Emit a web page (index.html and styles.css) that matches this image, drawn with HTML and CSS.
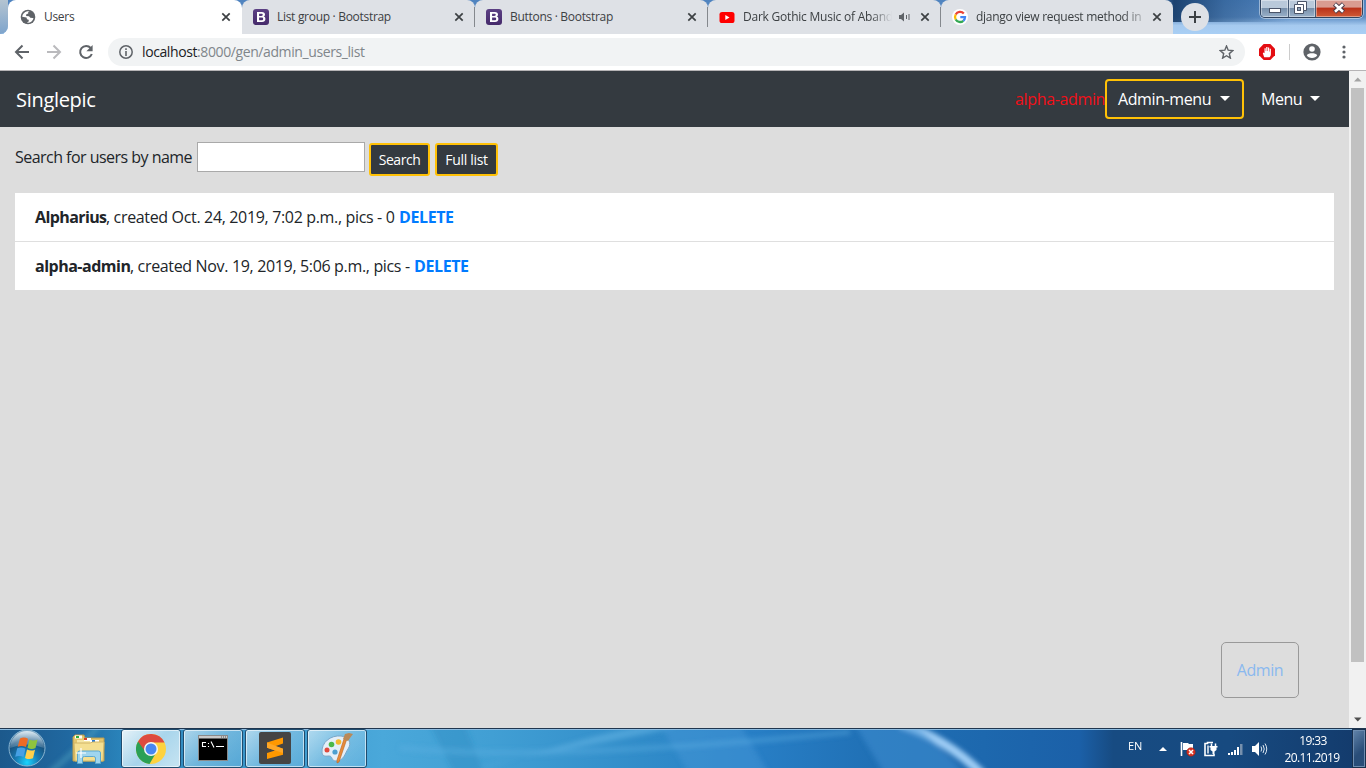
FILE: index.html
```html
<!DOCTYPE html>
<html lang="en">
<head>
<meta charset="utf-8">
<title>Users</title>
<link rel="stylesheet" href="styles.css">
</head>
<body>
<svg width="0" height="0" class="defs">
  <defs>
    <symbol id="close" viewBox="0 0 10 10"><path d="M1.3 1.3l7.4 7.4M8.7 1.3L1.3 8.7" stroke="#3c4043" stroke-width="1.7" fill="none"/></symbol>
    <linearGradient id="bs" x1="0" y1="0" x2="0" y2="1"><stop offset="0" stop-color="#5c4084"/><stop offset="1" stop-color="#452a6b"/></linearGradient>
    <symbol id="boot" viewBox="0 0 16 16"><rect width="16" height="16" rx="3" fill="url(#bs)"/><path fill-rule="evenodd" fill="#fff" d="M4 3h4.900c2 0 3.100 1 3.100 2.500 0 1-.5 1.700-1.300 2.100 1.100.3 1.700 1.200 1.700 2.400C12.400 11.900 11.100 13 9 13H4zM6.100 4.700v2.200h2.200c.9 0 1.500-.4 1.500-1.100s-.5-1.100-1.400-1.100zM6.100 8.500v2.800h2.500c1 0 1.600-.5 1.600-1.400s-.6-1.400-1.700-1.400z"/></symbol>
  </defs>
</svg>

<header class="tabstrip">
  <div class="tab active">
    <svg class="fav" viewBox="0 0 16 16"><circle cx="8" cy="8" r="7.300" fill="#5f6368"/><path d="M2.200 7.800C2.400 5 4.500 2.600 7.300 2.200L9.600 2.400 8 3.600 8.300 4.600 6.300 5.300 6.100 6.900 9 7.300 10.300 8.800 12.600 8.900 13.500 9.200C12.900 11.700 10.700 13.700 8 13.700L7 13.600 8.900 12.200 8.600 10.800 7 10.300 6.500 8.600z" fill="#fff"/></svg>
    <span class="title">Users</span><svg class="x"><use href="#close"/></svg>
  </div>
  <div class="tab"><svg class="fav"><use href="#boot"/></svg><span class="title">List group · Bootstrap</span><svg class="x"><use href="#close"/></svg></div>
  <div class="tab line"><svg class="fav"><use href="#boot"/></svg><span class="title">Buttons · Bootstrap</span><svg class="x"><use href="#close"/></svg></div>
  <div class="tab line"><svg class="fav" viewBox="0 0 16 16"><rect x="0.500" y="3" width="15" height="11" rx="2.600" fill="#f00"/><path d="M6.300 6v5l4.200-2.500z" fill="#fff"/></svg><span class="title fade audio">Dark Gothic Music of Aband</span>
    <svg class="sound" viewBox="0 0 12 10"><path d="M0 3h2l3-2.500v9L2 7H0z" fill="#5f6368"/><path d="M7.500 3v4M10 2v6" stroke="#5f6368" fill="none"/></svg>
    <svg class="x"><use href="#close"/></svg></div>
  <div class="tab line last"><svg class="fav" viewBox="0 0 16 16"><circle cx="8" cy="8" r="8" fill="#fff"/><g fill="none" stroke-width="2.300"><path d="M11.800 4.500A5 5 0 0 0 3.700 5.500" stroke="#ea4335"/><path d="M3.700 5.500a5 5 0 0 0 0 5" stroke="#fbbc05"/><path d="M3.700 10.500a5 5 0 0 0 7.600 1.300" stroke="#34a853"/><path d="M11.300 11.800A5 5 0 0 0 13 8.200H8.300" stroke="#4285f4"/></g></svg><span class="title fade">django view request method in</span><svg class="x"><use href="#close"/></svg></div>
  <div class="newtab"><svg width="12" height="12"><path d="M6 0v12M0 6h12" stroke="#3c4043" stroke-width="2"/></svg></div>
  <div class="winctl">
    <div class="wb min"><svg width="14" height="7"><rect x="1.500" y="1.500" width="11" height="4" fill="#fff" stroke="#4a5468"/></svg></div>
    <div class="wb max"><svg width="13" height="13"><path d="M3.500.5h9v9h-3v3h-9v-9h3z" fill="#fff" stroke="#4a5468"/><path d="M3.500 3.500h6v6" fill="none" stroke="#4a5468"/><rect x="3.500" y="6.500" width="3" height="3" fill="#8fa3ba" stroke="#4a5468"/></svg></div>
    <div class="wb cls"><svg width="14" height="12"><path d="M2.500 2l9 8M11.500 2l-9 8" stroke="#4a3a48" stroke-width="4.600"/><path d="M3 2.300l8 7.400M11 2.300L3 9.700" stroke="#fff" stroke-width="2.600"/></svg></div>
  </div>
</header>

<div class="toolbar">
  <svg class="nav-ico" viewBox="0 0 16 16"><path d="M15 8H2.500M8.500 1.500L2 8l6.500 6.500" stroke="#5f6368" stroke-width="2" fill="none"/></svg>
  <svg class="nav-ico" viewBox="0 0 16 16"><path d="M1 8h12.500M7.500 1.500L14 8l-6.500 6.500" stroke="#bababd" stroke-width="2" fill="none"/></svg>
  <svg class="nav-ico" viewBox="0 0 16 16"><path d="M12.700 4A6 6 0 1 0 13.800 10" stroke="#5f6368" stroke-width="2" fill="none"/><path d="M14.600 1v6.200H8.400z" fill="#5f6368"/></svg>
  <div class="omnibox">
    <svg width="14" height="14"><circle cx="7" cy="7" r="6.200" fill="none" stroke="#5f6368" stroke-width="1.500"/><path d="M7 6v5M7 3.200v1.700" stroke="#5f6368" stroke-width="1.600"/></svg>
    <span class="url"><b>localhost</b>:8000/gen/admin_users_list</span>
    <svg class="star" width="15" height="14" viewBox="0 0 15 14"><path d="M7.500 1l1.700 4.200 4.600.4-3.500 3 1.100 4.500-3.900-2.400-3.900 2.400 1.100-4.500-3.500-3 4.600-.4z" fill="none" stroke="#5f6368" stroke-width="1.400"/></svg>
  </div>
  <svg class="block" width="16" height="16"><path d="M4.700 0h6.600L16 4.700v6.600L11.300 16H4.700L0 11.300V4.700z" fill="#e40d12"/><path d="M5.200 13.300L3.800 9.200l.7-.6 1 .7V4.300h1.200V7h.5V2.900h1.300V7h.5V3.400h1.200v4h.5V4.700h1.200v5.200c0 1.700-.7 2.700-1.400 3.400z" fill="#fff"/></svg>
  <span class="sep"></span>
  <svg class="user" width="18" height="18"><circle cx="9" cy="9" r="8.600" fill="#5f6368"/><circle cx="9" cy="6" r="2.800" fill="#fff"/><path d="M3.800 12.200C5.500 9.600 12.500 9.600 14.200 12.200 12.500 15.800 5.500 15.800 3.800 12.200z" fill="#fff"/></svg>
  <svg class="dots" width="4" height="14"><g fill="#5f6368"><circle cx="2" cy="2" r="1.600"/><circle cx="2" cy="7" r="1.600"/><circle cx="2" cy="12" r="1.600"/></g></svg>
</div>

<div class="viewport">
  <main class="page">
    <nav class="navbar">
      <a class="brand">Singlepic</a>
      <span class="who">alpha-admin</span>
      <a class="adminmenu"><span>Admin-menu</span><i class="caret"></i></a>
      <a class="menu"><span>Menu</span><i class="caret"></i></a>
    </nav>
    <form class="search">
      <label>Search for users by name</label>
      <input type="text">
      <button type="button">Search</button>
      <button type="button" class="full">Full list</button>
    </form>
    <ul class="list">
      <li><b class="n1">Alpharius</b><span class="d1">, created Oct. 24, 2019, 7:02 p.m., pics - 0</span><a>DELETE</a></li>
      <li><b class="n2">alpha-admin</b><span class="d2">, created Nov. 19, 2019, 5:06 p.m., pics -</span><a>DELETE</a></li>
    </ul>
    <button type="button" class="admin">Admin</button>
  </main>
  <div class="scroll">
    <svg width="17" height="17"><path d="M5 10.500h7.500L8.750 6.500z" fill="#a3a3a3"/></svg>
    <div class="thumb"></div>
    <svg width="17" height="17"><path d="M5 6.500h7.500L8.750 10.500z" fill="#505050"/></svg>
  </div>
</div>

<footer class="taskbar">
  <svg class="wall" viewBox="0 0 1366 38" preserveAspectRatio="none">
    <defs>
      <linearGradient id="sky"><stop offset="0" stop-color="#1c598c"/><stop offset=".05" stop-color="#2068a0"/><stop offset=".09" stop-color="#2a84bb"/><stop offset=".28" stop-color="#4aa8da"/><stop offset=".36" stop-color="#419fd4"/><stop offset=".47" stop-color="#318cc9"/><stop offset=".55" stop-color="#287fc6"/><stop offset=".64" stop-color="#2070b5"/><stop offset=".72" stop-color="#1d68ae"/><stop offset=".79" stop-color="#1b60a8"/><stop offset=".815" stop-color="#174b82"/><stop offset=".9" stop-color="#174a80"/><stop offset="1" stop-color="#133a6b"/></linearGradient>
      <filter id="soft" x="-20%" y="-50%" width="140%" height="200%"><feGaussianBlur stdDeviation="2.600"/></filter>
    </defs>
    <rect width="1366" height="38" fill="url(#sky)"/>
    <g filter="url(#soft)">
      <path d="M900-6C935 5 960 22 982 44" stroke="#9fcdf5" stroke-width="9" fill="none"/>
      <path d="M470 40C540 20 590 18 680-4L640-4C570 10 530 28 470 40z" fill="#6cb9e8" opacity=".5"/>
      <path d="M430-5l25 50h30L465-5z" fill="#2686be" opacity=".35"/>
      <path d="M660-5h80l30 50h-80z" fill="#4b9bda" opacity=".4"/>
      <path d="M50 42q25-20 48-45" stroke="#5fb4c9" stroke-width="5" fill="none" opacity=".4"/>
      <path d="M855-5h60q30 25 50 50h-80z" fill="#3f91d3" opacity=".5"/>
      <path d="M400 18q150 14 450-16" stroke="#62b2e4" stroke-width="5" fill="none" opacity=".4"/>
    </g>
  </svg>
  <div class="start"><svg width="40" height="38" viewBox="0 0 40 38">
    <defs><radialGradient id="orb" cx=".5" cy=".9" r=".9"><stop offset="0" stop-color="#19d5ff"/><stop offset=".35" stop-color="#187cb4"/><stop offset=".7" stop-color="#184f7b"/><stop offset="1" stop-color="#7fa9c7"/></radialGradient><linearGradient id="shine" x1="0" y1="0" x2="0" y2="1"><stop offset="0" stop-color="#f0f7fb" stop-opacity=".85"/><stop offset="1" stop-color="#a4c4d8" stop-opacity=".25"/></linearGradient></defs>
    <circle cx="20" cy="19" r="18" fill="url(#orb)" stroke="#8ab6d2" stroke-width="1"/>
    <path d="M3 19a17 17 0 0 1 34 0q-17-7-34 0z" fill="url(#shine)"/>
    <path d="M13 9.500q4-2 8 .3L19 18q-4-2-8.300-.3z" fill="#ee6b25"/><path d="M22.500 10.500q4 2 8 0L28.500 19q-4 2-8-.3z" fill="#8fc43e"/><path d="M10.200 19.300q4.300-1.700 8.300.4L16.500 28q-4-2-8.300-.3z" fill="#46a0e4"/><path d="M20 20.500q4 2 8 .2L26 29.300q-4 1.800-8-.4z" fill="#ffd04a"/>
  </svg></div>
  <div class="folder"><svg width="34" height="32" viewBox="0 0 34 32"><path d="M1 27V3l2-2h9l1 3h19v23z" fill="#e3c56d" stroke="#b99b4c"/><path d="M3 1.500h7v3H3z" fill="#fff"/><path d="M4 2h3v2H4z" fill="#2dae3d"/><path d="M5 6h18v18H5z" fill="#f6e6a4"/><path d="M12 4h7v3h-7z" fill="#fff"/><path d="M12 4h3v2h-3z" fill="#d5402b"/><path d="M18 6h9v3h-9z" fill="#fff"/><path d="M20 6h3v2h-3z" fill="#2a7bd4"/><path d="M2 9h16l3-1h11l-1 19H3z" fill="#f4df91" stroke="#d1b566"/><path d="M5.500 29.500V19q0-2 2-2h19q2 0 2 2v10.500h-5V24q0-1.500-2-1.500h-9q-2 0-2 1.500v5.500z" fill="#9fd5ee" stroke="#5ca8ce"/><path d="M9 14v10M4 19h10" stroke="#fff" stroke-width="1.200"/></svg></div>
  <div class="app on"><svg width="30" height="30" viewBox="0 0 30 30"><circle cx="15" cy="15" r="15" fill="#fdd23f"/><path d="M15 15L2 7.500A15 15 0 0 0 13.500 30l7-12z" fill="#2aa056"/><path d="M2 7.500A15 15 0 0 1 28.500 8.500H15a6.500 6.500 0 0 0-6.300 8.200z" fill="#dd4b40"/><circle cx="15" cy="15" r="7" fill="#f4f6f4"/><circle cx="15" cy="15" r="5.500" fill="#4787f2"/></svg></div>
  <div class="app"><svg width="30" height="26" viewBox="0 0 30 26"><rect x=".5" y=".5" width="29" height="25" fill="#000" stroke="#8a8a8a"/><path d="M1 1h28v2.500H1z" fill="#c9c9c9"/><path d="M23 2h1M25 2h1M27 2h1" stroke="#555"/><path d="M8 7.500H4.500v4H8M10.500 8v1M10.500 11v1M13 6.500l3 6M18 11.500h8" fill="none" stroke="#fff" stroke-width="1.100"/></svg></div>
  <div class="app"><svg width="32" height="32" viewBox="0 0 32 32"><rect width="32" height="32" rx="2" fill="#454545"/><path d="M8 10.500L24 5.500v6l-8 2.700 8 2.500v6L8 27v-6l8-2.500-8-2.700z" fill="#ff9800"/><path d="M8 10.500v5.300l16 5.200v-4.300z" fill="#ffa726"/></svg></div>
  <div class="app"><svg width="32" height="32" viewBox="0 0 32 32"><path d="M1 21C0 10 10 3 20 4c8 1 11 7 7 13-3 4-4 12-12 12-5 0-3-5-7-5-3 0-6 1-7-3z" fill="#e4eff8" stroke="#7da6c7"/><circle cx="6" cy="18" r="2.500" fill="#e04a3d"/><circle cx="10.500" cy="12.500" r="2.800" fill="#4cb849"/><circle cx="17.500" cy="10" r="2.800" fill="#f5b82e"/><circle cx="14" cy="20" r="2.600" fill="#4c9fd0"/><path d="M25.500 8L18 30l-2 1v-3L23 7z" fill="#e68a3a" stroke="#b96521" stroke-width=".6"/><path d="M22 7l2-5 4-1 4 1-3 4-2 3z" fill="#b98959"/></svg></div>
  <div class="tray">
    <span class="lang">EN</span>
    <svg class="t1" width="8" height="4"><path d="M0 4L4 0l4 4z" fill="#fff"/></svg>
    <svg class="t2" width="16" height="16"><path d="M1.500 1v14" stroke="#fff" stroke-width="1.600"/><path d="M3 2h5l1 1h4v7H8L7 9H3z" fill="#fff"/><circle cx="11" cy="11" r="4.300" fill="#d93425" stroke="#8e2115" stroke-width=".5"/><path d="M9 9l4 4M13 9l-4 4" stroke="#fff" stroke-width="1.500"/></svg>
    <svg class="t3" width="14" height="16"><path d="M9 1.500H3.500v1H1v12h9V13" fill="none" stroke="#fff" stroke-width="1.600"/><path d="M3 4.500h2v8H3z" fill="#fff" opacity=".7"/><path d="M7.500 2.500v3M11.500 2.500v3" stroke="#fff" stroke-width="1.500"/><path d="M5.500 5h8v1.500h-1V9l-2 1.500V13H8.500v-2.500L6.500 9V6.500h-1z" fill="#fff"/></svg>
    <svg class="t4" width="15" height="12"><path d="M0 9h2v2H0zM3 8h2v3H3zM6 6h2v5H6zM9 3h2v8H9z" fill="#fff"/><path d="M12 0h2.500v11H12z" fill="#7690ad"/></svg>
    <svg class="t5" width="16" height="14"><path d="M0 4h3l4-4v14L3 10H0z" fill="#fff"/><path d="M9 4.500q1.500 2.500 0 5M11 3q2.500 4 0 8M13 1.500q3.500 5.500 0 11" stroke="#dce7f2" fill="none"/></svg>
    <div class="clock"><span class="tm">19:33</span><span>20.11.2019</span></div>
    <span class="peek"></span>
  </div>
</footer>
</body>
</html>
```
FILE: styles.css
```css
* { box-sizing: border-box; }
body { margin: 0; width: 1366px; height: 768px; overflow: hidden; display: flex; flex-direction: column; font-family: "Open Sans", "Noto Sans", sans-serif; color: #212529; }
.defs { position: absolute; }
svg { display: block; flex: none; }

.tabstrip { height: 34px; flex: none; display: flex; padding-left: 8px; position: relative; white-space: nowrap;
  background: linear-gradient(90deg, transparent 1160px, rgba(18,54,98,.85) 1174px, rgba(35,80,130,.5) 1225px, transparent 1290px) 0 0 / 100% 22px no-repeat, linear-gradient(#4f83bf, #5d8dc4 50%, #a6caef 75%, #a9cff5); }
.tabstrip::before { content: ""; position: absolute; left: 0; top: 0; width: 8px; height: 34px; background: linear-gradient(#b4c4d1, #7ea4cc); border-bottom-right-radius: 8px; box-shadow: 4px 4px 0 #fff; clip-path: inset(0); }
.tab { width: 233px; height: 34px; flex: none; display: flex; align-items: center; background: #dee1e6; border-radius: 8px 8px 0 0; padding-left: 11px; position: relative; }
.tab.active { width: 234px; background: #fff; padding-left: 12px; }
.tab.last { width: 232px; }
.tab.line::before { content: ""; position: absolute; left: -1px; top: 7px; width: 1px; height: 20px; background: #84888d; }
.fav { width: 16px; height: 16px; }
.title { width: 180px; margin-left: 8px; font-size: 12px; line-height: 16px; letter-spacing: -.3px; color: #3c4043; overflow: hidden; }
.active .title { letter-spacing: -.3px; }
.x { width: 10px; height: 10px; margin-left: -3px; }
.title.fade { width: 168px; margin-right: 11px; letter-spacing: -.27px; -webkit-mask-image: linear-gradient(90deg, #000 146px, rgba(0,0,0,.3) 166px); mask-image: linear-gradient(90deg, #000 146px, rgba(0,0,0,.3) 166px); }
.title.audio { width: 150px; margin-right: 6px; letter-spacing: -.22px; -webkit-mask-image: linear-gradient(90deg, #000 128px, transparent 149px); mask-image: linear-gradient(90deg, #000 128px, transparent 149px); }
.sound { width: 12px; height: 10px; margin-right: 12px; }
.newtab { width: 28px; height: 28px; border-radius: 50%; background: #dee1e6; margin: 3px 0 0 8px; display: flex; align-items: center; justify-content: center; }
.winctl { display: flex; height: 18px; margin-left: auto; margin-right: 3px; width: 103px; border: 1px solid #31445f; border-top: 0; border-radius: 0 0 5px 5px; overflow: hidden; box-shadow: 0 0 0 1px rgba(255,255,255,.45); }
.wb { display: flex; justify-content: center; align-items: center; background: linear-gradient(#b9c9da 0 45%, #7890ab 50%, #9ab1c9); box-shadow: inset 0 0 0 1px rgba(255,255,255,.4); }
.min { width: 28px; border-right: 1px solid #465b76; padding-top: 3px; }
.max { width: 27px; border-right: 1px solid #465b76; padding: 0 3px 2px 0; }
.cls { flex: 1; background: linear-gradient(#d99b90 0 40%, #bb331b 50%, #cf5a35); padding-bottom: 2px; }

.toolbar { height: 36px; flex: none; background: #fff; display: flex; align-items: center; padding-left: 14px; }
.nav-ico { width: 16px; height: 16px; margin-right: 16px; }
.omnibox { width: 1137px; height: 28px; margin-left: -2px; border-radius: 14px; background: #f1f3f4; display: flex; align-items: center; padding: 0 11px; }
.url { margin-left: 9px; font-size: 14px; letter-spacing: -.4px; color: #80868b; padding-bottom: 1px; }
.url b { font-weight: 400; color: #202124; }
.star { margin-left: auto; }
.block { margin-left: 14px; }
.sep { width: 1px; height: 16px; background: #ccc; margin-left: 14px; }
.user { margin-left: 13px; }
.dots { margin-left: 21px; }

.viewport { height: 658px; flex: none; border-top: 1px solid #b6b4b6; display: flex; background: #ddd; }
.page { width: 1349px; flex: none; display: flex; flex-direction: column; font-size: 16px; line-height: 24px; white-space: nowrap; }
.navbar { height: 56px; background: #343a40; color: #fff; display: flex; align-items: center; padding-left: 16px; }
.brand { font-size: 20px; letter-spacing: -.3px; line-height: 30px; padding-top: 2px; }
.who { margin-left: auto; width: 90px; color: #f30f18; letter-spacing: -.35px; }
.adminmenu { width: 139px; height: 40px; border: 2px solid #ffc107; border-radius: 4px; padding: 0 12px 0 11px; display: flex; align-items: center; justify-content: space-between; letter-spacing: -.4px; }
.menu { width: 59px; margin: 0 29px 0 17px; display: flex; align-items: center; justify-content: space-between; letter-spacing: -.5px; }
.caret { border: 5px solid transparent; border-top-color: #fff; border-bottom: 0; margin-top: -2px; }
.search { display: flex; padding: 15px 0 0 15px; height: 66px; align-items: flex-start; }
.search label { width: 182px; padding-top: 3px; letter-spacing: -.53px; }
.search input { width: 168px; height: 30px; border: 1px solid #a9a9a9; background: #fff; padding: 0; }
button { font-family: inherit; margin: 0; padding: 0; }
.search button { margin: 1px 0 0 4px; width: 61px; height: 33px; border: 2px solid #ffc107; border-radius: 3px; background: #343a40; color: #fff; font-size: 14px; letter-spacing: -.45px; }
.search .full { margin-left: 5px; width: 63px; letter-spacing: -.3px; }
.list { margin: 0 15px; padding: 0; list-style: none; }
.list li { height: 49px; background: #fff; padding: 0 20px; display: flex; align-items: center; border-bottom: 1px solid #dfdfdf; }
.list li:last-child { border: 0; height: 48px; }
.list b { letter-spacing: -.5px; }
.list .n1 { width: 71px; letter-spacing: -.6px; } .d1 { width: 293px; }
.n2 { width: 95px; } .d2 { width: 284px; }
.list span { letter-spacing: -.34px; }
.list a { font-weight: 700; color: #007bff; letter-spacing: -.4px; }
.admin { margin: auto 50px 30px auto; width: 78px; height: 56px; border: 1px solid #999; border-radius: 5px; background: transparent; color: #8ab9ef; font-size: 16px; letter-spacing: -.4px; }
.scroll { width: 17px; background: #f1f1f1; display: flex; flex-direction: column; }
.thumb { width: 13px; height: 574px; margin: 0 2px auto; background: #c1c1c1; }

.taskbar { height: 40px; flex: none; position: relative; display: flex; border-top: 1px solid #20364f; box-shadow: inset 0 1px 0 #8bbbe0; }
.wall { position: absolute; left: 0; top: 1px; width: 1366px; height: 38px; z-index: -1; }
.start { margin-left: 7px; width: 64px; }
.folder { width: 50px; padding: 5px 0 0 1px; }
.app { width: 60px; height: 39px; margin-right: 2px; border: 1px solid #1f4c6e; border-radius: 3px; background: linear-gradient(135deg, rgba(225,244,252,.7), rgba(150,206,235,.6) 50%, rgba(113,186,226,.5)); box-shadow: inset 0 0 0 1px rgba(255,255,255,.6); display: flex; align-items: center; justify-content: center; padding-bottom: 2px; }
.app.on { background: linear-gradient(135deg, rgba(240,249,252,.95), rgba(190,226,243,.85) 50%, rgba(225,243,250,.85)); padding-bottom: 0; }
.tray { margin-left: auto; width: 238px; display: flex; color: #fff; font-size: 12px; }
.lang { width: 31px; font-size: 11px; line-height: 15px; padding-top: 9px; letter-spacing: 0; }
.t1 { margin-top: 18px; } .t2 { margin: 12px 0 0 13px; } .t3 { margin: 12px 0 0 8px; }
.t4 { margin: 15px 0 0 10px; } .t5 { margin: 13px 0 0 9px; }
.clock { width: 70px; margin-left: 9px; display: flex; flex-direction: column; align-items: center; line-height: 17px; padding-top: 3px; letter-spacing: -.6px; white-space: nowrap; }
.clock .tm { padding-left: 2px; }
.peek { margin-left: auto; width: 14px; height: 39px; border: 1px solid #18304d; box-shadow: inset 0 0 0 1px #6d8caf; background: linear-gradient(135deg, #6385ab, #294d78 60%); }
```
